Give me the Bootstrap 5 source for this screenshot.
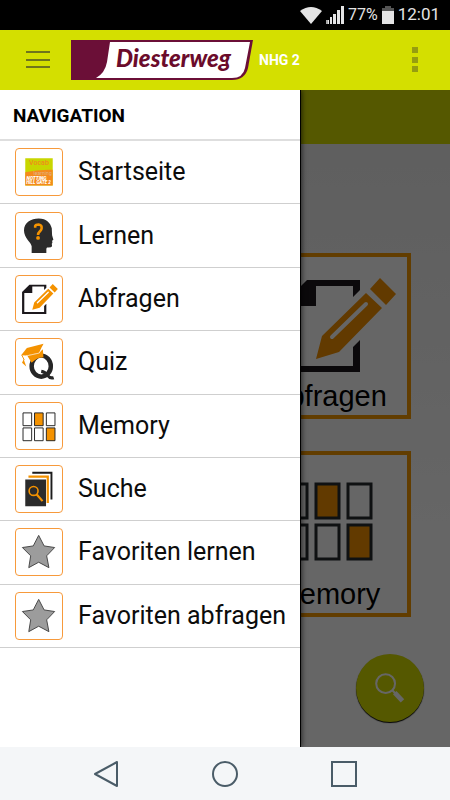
<!DOCTYPE html>
<html lang="de">
<head>
<meta charset="utf-8">
<meta name="viewport" content="width=device-width, initial-scale=1">
<title>Diesterweg NHG 2</title>
<link rel="stylesheet" href="https://cdn.jsdelivr.net/npm/bootstrap@5.3.0/dist/css/bootstrap.min.css">
<style>
  body { font-family: Roboto, sans-serif; color: #000; }
  svg { display: block; flex: none; }
  button { border: 0; background: none; padding: 0; }
  .status-bar { height: 30px; background: #000; color: #e4e4e4; font-size: 17px; padding-right: 10px; }
  .battery-level { font-size: 16px; }
  .app-bar { height: 60px; background: #d4df00; padding: 0 24px; }
  .app-title { font-size: 14px; font-weight: 700; color: #fff; margin-left: 6px; }
  .logo-text { font: italic 900 24px Lato, sans-serif; }
  .menu-button { width: 28px; height: 40px; margin-right: 19px; }
  .stage { background: #fff; }
  .strip { height: 54px; background: #d5dd00; }
  .tiles { padding: 109px 39px 0; gap: 32px; background: linear-gradient(#ededed, #fff 400px); }
  .tile-button { width: 166px; height: 166px; border: 4px solid #f49800; background: #fff; }
  .tile-label { font: 29px/46px "Liberation Sans", Arial, sans-serif; color: #000; }
  .fab { right: 26px; bottom: 25px; width: 68px; height: 68px; background: #d5dd00; box-shadow: 0 1px 1px #000; }
  .scrim { background: rgba(0, 0, 0, .6); }
  .drawer { width: 301px; background: #fff; border-right: 1px solid #000; box-shadow: 1px 0 5px rgba(0, 0, 0, .6); }
  .drawer-title { font-size: 19px; line-height: 24px; font-weight: 700; padding: 14px 13px 11px; margin: 0; border-bottom: 2px solid #dedede; height: 51px; }
  .drawer-list { display: grid; grid-auto-rows: 1fr; height: 507px; }
  .drawer-link { height: 100%; gap: 15px; padding-left: 15px; border-bottom: 1px solid #cfcfcf; color: #0c0c0c; font-size: 25px; line-height: 30px; white-space: nowrap; text-decoration: none; }
  .icon-frame { width: 48px; height: 48px; border: 1px solid #f79a3b; border-radius: 4px; }
  .system-bar { height: 53px; background: #f4f6f8; }
  .system-bar button { width: 119px; }
</style>
<script src="https://cdn.jsdelivr.net/npm/bootstrap@5.3.0/dist/js/bootstrap.bundle.min.js"></script>
</head>
<body>
<svg width="0" height="0" class="position-absolute" aria-hidden="true">
  <symbol id="page-pencil" viewBox="-12 4 150 116" overflow="visible">
    <path fill="#1c181c" d="M42 27H95V37L88 44V33H51V53H26V113H88V94L95 87V119H19V50Z"/>
    <path fill="#f49200" d="M115 25L131 41L121 52L105 36ZM101 40L117 55L74 99L51 106L57 83Z"/>
    <path stroke="#fff" stroke-width="4" stroke-linecap="round" d="M101 51L67 84"/>
  </symbol>
  <symbol id="star" viewBox="0 0 144 144">
    <path fill="#9c9c9c" stroke="#444" stroke-width="3" d="M71 20L88 53L121 58L96 84L103 121L71 104L40 121L46 84L20 58L54 53Z"/>
  </symbol>
</svg>
<div class="d-flex flex-column min-vh-100">
  <div class="status-bar d-flex align-items-center justify-content-end">
    <svg width="22" height="17" viewBox="0 0 22 17"><path fill="#e4e4e4" d="M0 4Q11-4 22 4L11 17Z"/></svg>
    <svg class="ms-1" width="18" height="18" viewBox="0 0 18 18"><path fill="#aaa" d="M0 14h3v4H0z"/><path fill="#e4e4e4" d="M2 14h1v4H2zM4 11h2v7H4zM7 8h3v10H7zM11 4h3v14h-3zM15 0h3v18h-3z"/></svg>
    <span class="battery-level ms-1">77%</span>
    <svg class="ms-1" width="12" height="18" viewBox="0 0 12 18"><path fill="#555" d="M3 0h6v2h3v4H0V2h3z"/><path fill="#e4e4e4" d="M0 5h12v13H0z"/></svg>
    <span class="ms-1">12:01</span>
  </div>

  <header class="app-bar d-flex align-items-center">
    <button class="menu-button" type="button" aria-label="Menü">
      <svg width="28" height="40" viewBox="0 0 28 40"><path stroke="#6f741c" stroke-width="2" d="M2 12H26M2 20H26M2 27H26"/></svg>
    </button>
    <svg width="182" height="40" viewBox="0 0 182 40" role="img" aria-label="Diesterweg">
      <path fill="#6b0f37" d="M0 0H182L177 28Q174 40 161 40H0Z"/>
      <path fill="#fff" d="M39 2H179L174 28Q172 38 161 38H25Q34 33 36 22Z"/>
      <text class="logo-text" x="45" y="27" fill="#6b0b2b">Diesterweg</text>
    </svg>
    <span class="app-title">NHG 2</span>
    <button class="ms-auto" type="button" aria-label="Weitere Optionen">
      <svg width="22" height="40" viewBox="0 0 22 40"><path fill="#969d10" d="M8 7h6v6H8zM8 17h6v6H8zM8 26h6v6H8z"/></svg>
    </button>
  </header>

  <div class="stage position-relative overflow-hidden flex-grow-1 d-flex flex-column">
    <main class="flex-grow-1 d-flex flex-column">
      <div class="strip"></div>
      <div class="tiles flex-grow-1 d-flex flex-column align-items-end">
        <button class="tile-button d-flex flex-column align-items-center" type="button">
          <svg width="150" height="116"><use href="#page-pencil"/></svg>
          <span class="tile-label">Abfragen</span>
        </button>
        <button class="tile-button d-flex flex-column align-items-center" type="button">
          <svg width="150" height="116" viewBox="253 455 150 116">
            <g fill="#fff" stroke="#262c2e" stroke-width="3">
              <path d="M284 484h23v34h-23zM348 484h23v34h-23zM284 525h23v34h-23zM316 525h23v34h-23z"/>
              <path fill="#f49200" d="M316 484h23v34h-23zM348 525h23v34h-23z"/>
            </g>
          </svg>
          <span class="tile-label">Memory</span>
        </button>
      </div>
      <button class="fab position-absolute rounded-circle" type="button" aria-label="Suchen">
        <svg width="68" height="68" viewBox="0 0 202 202"><circle cx="88" cy="88" r="28" fill="none" stroke="#fff" stroke-width="6"/><path stroke="#fff" stroke-width="6" d="M107 107L118 118"/><path stroke="#fff" stroke-width="14" stroke-linejoin="round" d="M115 115L138 139"/></svg>
      </button>
    </main>
    <div class="scrim position-absolute top-0 start-0 w-100 h-100"></div>
    <nav class="drawer position-absolute top-0 start-0 h-100" aria-labelledby="drawer-title">
      <h2 class="drawer-title" id="drawer-title">NAVIGATION</h2>
      <ul class="drawer-list list-unstyled mb-0">
        <li><a class="drawer-link d-flex align-items-center" href="#">
          <svg class="icon-frame" viewBox="0 0 144 144">
            <path fill="#c8d600" d="M29 29H115V114H29Z"/><path fill="#f58a1c" d="M29 73Q70 63 115 65V114H29Z"/>
            <text x="41" y="51" font-size="22" font-weight="500" fill="#f08a1c">Vocab</text>
            <text x="55" y="82" font-size="16" fill="#e0b58a">learning</text>
            <g fill="#fff" font-weight="900" font-style="italic"><text x="33" y="97" font-size="15">NOTTING</text><text x="32" y="110" font-size="14">HILL GATE 2</text></g>
          </svg>Startseite</a></li>
        <li><a class="drawer-link d-flex align-items-center" href="#">
          <svg class="icon-frame" viewBox="0 0 144 144">
            <path fill="#2b2b2b" d="M49 125V104C47 92 25 78 25 55C25 30 47 17 71 17C96 17 108 31 112 48L113 70L117 84L113 87L114 93L112 96L113 104Q111 109 97 108L95 112V125Z"/>
            <path fill="none" stroke="#f49200" stroke-width="8" d="M60 46V41Q62 36 71 36Q82 38 80 49C78 59 69 58 69 69"/><circle cx="69" cy="78" r="6" fill="#f49200"/>
          </svg>Lernen</a></li>
        <li><a class="drawer-link d-flex align-items-center" href="#">
          <svg class="icon-frame" viewBox="0 0 144 144"><use href="#page-pencil" x="-12" y="4" width="150" height="116"/></svg>Abfragen</a></li>
        <li><a class="drawer-link d-flex align-items-center" href="#">
          <svg class="icon-frame" viewBox="0 0 144 144">
            <ellipse cx="79" cy="85" rx="30" ry="33" fill="none" stroke="#262626" stroke-width="14"/>
            <path fill="none" stroke="#262626" stroke-width="10" d="M79 101Q91 103 99 114T118 121"/>
            <path fill="#f49200" d="M34 50L73 42L84 32L86 58Q68 56 49 74Z"/>
            <path fill="#f49200" d="M16 51L34 28L86 15L73 43L32 52Z"/>
            <path fill="none" stroke="#fff" stroke-width="2" d="M32 53L73 44L84 22"/>
            <path fill="none" stroke="#f49200" stroke-width="3" d="M18 50L26 66"/><path fill="#f49200" d="M24 63L32 86L19 74Z"/>
          </svg>Quiz</a></li>
        <li><a class="drawer-link d-flex align-items-center" href="#">
          <svg class="icon-frame" viewBox="0 0 144 144">
            <g fill="#fff" stroke="#222" stroke-width="3">
              <path d="M22 31h27v40H22zM95 31h27v40H95zM22 78h27v40H22zM58 78h27v40H58z"/>
              <path fill="#f49200" d="M58 31h27v40H58zM95 78h27v40H95z"/>
            </g>
          </svg>Memory</a></li>
        <li><a class="drawer-link d-flex align-items-center" href="#">
          <svg class="icon-frame" viewBox="0 0 144 144">
            <path fill="#1c1c1c" d="M51 18H114V105H108V24H51Z"/><path fill="#f49200" d="M39 30H103V116H96V37H39Z"/><path fill="#2b2b2b" d="M29 42H94V126H29Z"/>
            <circle cx="55" cy="78" r="14" fill="none" stroke="#f49200" stroke-width="5"/><path stroke="#f49200" stroke-width="7" d="M65 89L83 110"/>
          </svg>Suche</a></li>
        <li><a class="drawer-link d-flex align-items-center" href="#">
          <svg class="icon-frame"><use href="#star"/></svg>Favoriten lernen</a></li>
        <li><a class="drawer-link d-flex align-items-center" href="#">
          <svg class="icon-frame"><use href="#star"/></svg>Favoriten abfragen</a></li>
      </ul>
    </nav>
  </div>

  <footer class="system-bar d-flex align-items-center justify-content-center">
    <button class="d-flex justify-content-center" type="button" aria-label="Zurück"><svg width="28" height="28" viewBox="0 0 28 28"><path fill="none" stroke="#4a5c68" stroke-width="2" stroke-linejoin="round" d="M25 2V26L3 14Z"/></svg></button>
    <button class="d-flex justify-content-center" type="button" aria-label="Startbildschirm"><svg width="28" height="28" viewBox="0 0 28 28"><circle cx="14" cy="14" r="12" fill="none" stroke="#4a5c68" stroke-width="2"/></svg></button>
    <button class="d-flex justify-content-center" type="button" aria-label="Übersicht"><svg width="28" height="28" viewBox="0 0 28 28"><path fill="none" stroke="#4a5c68" stroke-width="2" d="M2 2H26V26H2Z"/></svg></button>
  </footer>
</div>
</body>
</html>
